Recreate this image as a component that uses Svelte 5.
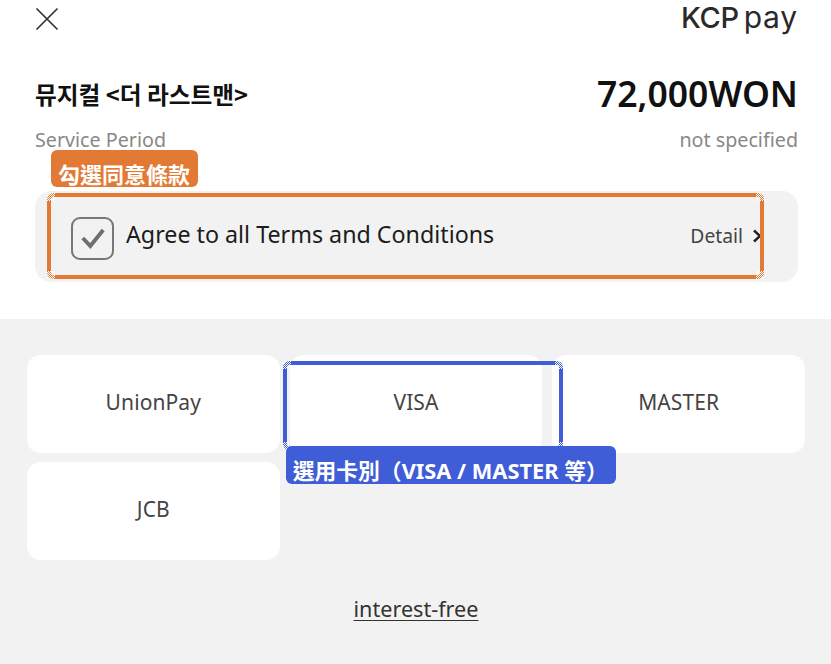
<script>
  const cards = ['UnionPay', 'VISA', 'MASTER', 'JCB'];
  const corners = ['tl', 'tr', 'bl', 'br'];
</script>

<div class="page">
  <section class="top">
    <header class="bar">
      <svg class="close" width="24" height="24" viewBox="0 0 24 24" aria-label="Close">
        <path d="M1.5 1.5 L22.5 22.5 M22.5 1.5 L1.5 22.5" fill="none" stroke="#333" stroke-width="1.7" />
      </svg>
      <div class="logo"><span class="kcp">KCP</span><span class="pay">pay</span></div>
    </header>

    <div class="row title-row">
      <h1>뮤지컬 &lt;더 라스트맨&gt;</h1>
      <div class="price">72,000WON</div>
    </div>
    <div class="row period-row">
      <span>Service Period</span>
      <span>not specified</span>
    </div>

    <div class="agree-wrap">
      <div class="tag orange">勾選同意條款</div>
      <div class="agree">
        <div class="agree-left">
          <span class="check">
            <svg width="28" height="28" viewBox="0 0 26 26">
              <path d="M3.5 13 L10.5 20.5 L22.5 5.5" fill="none" stroke="#6e6e6e" stroke-width="3.6" />
            </svg>
          </span>
          <span class="agree-text">Agree to all Terms and Conditions</span>
        </div>
        <div class="detail">
          Detail
          <svg width="10" height="14" viewBox="0 0 10 14">
            <path d="M2 1.5 L8 7 L2 12.5" fill="none" stroke="#222" stroke-width="2.4" />
          </svg>
        </div>
      </div>
      <div class="outline orange-line">
        {#each corners as k}<i class="corner {k}"></i>{/each}
      </div>
    </div>
  </section>

  <section class="bottom">
    <div class="grid">
      {#each cards as c, i}
        <div class="card" class:selected={i === 1}>
          <span class="label">{c}</span>
          {#if i === 1}
            <div class="outline blue-line">
              {#each corners as k}<i class="corner {k}"></i>{/each}
            </div>
            <div class="tag blue">選用卡別（VISA / MASTER 等）</div>
          {/if}
        </div>
      {/each}
    </div>
    <a class="free" href="#free">interest-free</a>
  </section>
</div>

<style>
  :global(body) {
    margin: 0;
  }
  .page {
    width: 831px;
    height: 664px;
    overflow: hidden;
    font-family: "Noto Sans", "Noto Sans CJK KR", sans-serif;
    color: #222;
    background: #fff;
  }
  .top {
    height: 319px;
    box-sizing: border-box;
    padding: 7px 33px 0 35px;
  }
  .bar {
    display: flex;
    justify-content: space-between;
    align-items: flex-start;
    height: 68px;
  }
  .logo {
    display: flex;
    align-items: baseline;
    font-family: Inter, sans-serif;
    color: #2a2a2a;
    line-height: 24px;
    height: 24px;
    margin-top: -2px;
  }
  .kcp {
    font-size: 29px;
    font-weight: 500;
    letter-spacing: -0.4px;
  }
  .pay {
    font-size: 30px;
    font-weight: 400;
    margin-left: 5px;
    letter-spacing: 0.8px;
  }
  .row {
    display: flex;
    justify-content: space-between;
    align-items: center;
  }
  .title-row {
    height: 38px;
  }
  h1 {
    margin: 0;
    font-size: 23.7px;
    font-weight: 700;
    color: #111;
    font-family: "Noto Sans CJK KR", sans-serif;
  }
  .price {
    font-size: 35.5px;
    font-weight: 600;
    color: #111;
    margin-top: -2px;
  }
  .period-row {
    margin-top: 12px;
    height: 28px;
    font-size: 19.7px;
    color: #888;
  }
  .agree-wrap {
    position: relative;
    margin-top: 38px;
    height: 91px;
  }
  .agree {
    height: 91px;
    border-radius: 16px;
    background: #f2f2f2;
    display: flex;
    justify-content: space-between;
    align-items: center;
    padding: 0 36px 6px 36px;
    box-sizing: border-box;
  }
  .agree-left {
    display: flex;
    align-items: center;
    gap: 12px;
  }
  .check {
    width: 43px;
    height: 43px;
    box-sizing: border-box;
    border: 2px solid #777;
    border-radius: 9px;
    display: flex;
    align-items: center;
    justify-content: center;
    margin-top: 9px;
  }
  .agree-text {
    font-size: 23.25px;
    color: #1c1c1c;
  }
  .detail {
    font-size: 19.3px;
    color: #444;
    display: flex;
    align-items: center;
    gap: 9px;
    margin-top: 4px;
  }
  .outline {
    position: absolute;
    box-sizing: border-box;
    pointer-events: none;
    z-index: 1;
  }
  .orange-line {
    left: 12px;
    top: 2px;
    width: 717px;
    height: 86px;
    border: 4px solid #e27a36;
    border-radius: 6px;
  }
  .corner {
    position: absolute;
    width: 8px;
    height: 8px;
    background: repeating-conic-gradient(#fff 0 25%, transparent 0 50%) 0 0 / 2px 2px;
  }
  .tl {
    left: -4px;
    top: -4px;
  }
  .tr {
    right: -4px;
    top: -4px;
  }
  .bl {
    left: -4px;
    bottom: -4px;
  }
  .br {
    right: -4px;
    bottom: -4px;
  }
  .tag {
    position: absolute;
    color: #fff;
    font-weight: 700;
    white-space: nowrap;
    box-sizing: border-box;
    font-family: "Noto Sans", "Noto Sans CJK TC", sans-serif;
    border-radius: 6px;
    z-index: 2;
  }
  .orange {
    left: 16px;
    top: -41px;
    width: 147px;
    height: 37px;
    background: #e27a36;
    font-size: 22px;
    line-height: 24px;
    padding: 12px 0 0 7px;
  }
  .bottom {
    height: 345px;
    background: #f2f2f2;
    padding: 36px 26px 0 27px;
    box-sizing: border-box;
    display: flex;
    flex-direction: column;
    align-items: stretch;
  }
  .grid {
    display: grid;
    grid-template-columns: repeat(3, 1fr);
    grid-auto-rows: 98px;
    column-gap: 10px;
    row-gap: 9px;
  }
  .card {
    position: relative;
    background: #fff;
    border-radius: 14px;
    display: flex;
    align-items: center;
    justify-content: center;
    font-size: 21px;
    color: #444;
    padding-bottom: 5px;
    box-sizing: border-box;
  }
  .card.selected {
    z-index: 1;
  }
  .label {
    letter-spacing: 0.1px;
  }
  .blue-line {
    left: -7px;
    top: 6px;
    width: 280px;
    height: 89px;
    border: 4px solid #3f5dd6;
    border-radius: 6px;
  }
  .blue {
    left: -4px;
    top: 91px;
    width: 330px;
    height: 38px;
    background: #3f5dd6;
    font-size: 21.8px;
    line-height: 26px;
    padding: 12px 0 0 7px;
  }
  .free {
    margin-top: 34px;
    align-self: center;
    font-size: 21.6px;
    color: #333;
    text-decoration: underline;
    text-underline-offset: 3px;
    text-decoration-thickness: 1px;
  }
</style>
